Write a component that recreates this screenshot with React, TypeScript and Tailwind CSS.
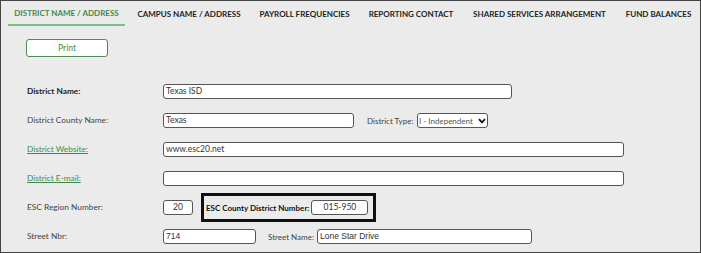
import React from "react";

const inputCls =
  "h-[15px] shrink-0 rounded-[3px] border border-[#555] bg-white px-[2px] text-[8.5px] text-[#333] leading-none flex items-center whitespace-nowrap overflow-hidden";

function Row({ children }: { children: React.ReactNode }) {
  return <div className="flex h-[29px] items-center">{children}</div>;
}

function Label({ children, bold, link }: { children: React.ReactNode; bold?: boolean; link?: boolean }) {
  return (
    <div
      className={
        "w-[136px] shrink-0 text-[8.3px] " +
        (link ? "text-[#3f8a45] underline" : bold ? "font-bold text-[#222]" : "text-[#444]")
      }
    >
      {children}
    </div>
  );
}

export default function App() {
  const tabs: { t: string; w: string }[] = [
    { t: "DISTRICT NAME / ADDRESS", w: "w-[117px]" },
    { t: "CAMPUS NAME / ADDRESS", w: "w-[116px]" },
    { t: "PAYROLL FREQUENCIES", w: "w-[103px]" },
    { t: "REPORTING CONTACT", w: "w-[98px]" },
    { t: "SHARED SERVICES ARRANGEMENT", w: "w-[147px]" },
    { t: "FUND BALANCES", w: "w-[79px]" },
  ];
  return (
    <div
      className="h-[253px] w-[701px] overflow-hidden border border-[#444] bg-[#ebebeb]"
      style={{ fontFamily: "Lato, 'Noto Sans', sans-serif" }}
    >
      <div className="flex h-[25px] items-end gap-[6px] pl-[7px]">
        {tabs.map(({ t, w }, i) => (
          <div
            key={t}
            className={
              "flex h-[25px] shrink-0 items-center justify-center text-[8px] font-bold whitespace-nowrap " +
              w +
              " " +
              (i === 0
                ? "border-b-2 border-[#7bbf7f] text-[#3f8a45]"
                : "text-[#222]")
            }
          >
            {t}
          </div>
        ))}
      </div>
      <div className="pl-[25px] pt-[13px]">
        <button className="flex h-[18px] w-[82px] items-center justify-center rounded-[3px] border border-[#4a8c4f] bg-white text-[8.5px] text-[#3f8a45]">
          Print
        </button>
      </div>
      <div className="pl-[26px] pt-[20px]">
        <Row>
          <Label bold>District Name:</Label>
          <div className={inputCls + " w-[349px]"}>Texas ISD</div>
        </Row>
        <Row>
          <Label>District County Name:</Label>
          <div className={inputCls + " w-[191px]"}>Texas</div>
          <span className="ml-[13px] w-[50px] shrink-0 text-[8px] text-[#444] whitespace-nowrap">District Type:</span>
          <div className={inputCls + " w-[71px] justify-between pl-[1px] pr-[1px] text-[8px]"}>
            <span className="text-[#555]">I - Independent</span>
            <svg width="8" height="6" viewBox="0 0 8 6" className="shrink-0">
              <path d="M1 1.2 L4 4.4 L7 1.2" fill="none" stroke="#111" strokeWidth="1.8" />
            </svg>
          </div>
        </Row>
        <Row>
          <Label link>District Website:</Label>
          <div className={inputCls + " w-[461px]"}>www.esc20.net</div>
        </Row>
        <Row>
          <Label link>District E-mail:</Label>
          <div className={inputCls + " w-[461px]"}></div>
        </Row>
        <Row>
          <Label>ESC Region Number:</Label>
          <div className={inputCls + " w-[30px] justify-center"}>20</div>
          <div className="ml-[8px] flex h-[29px] w-[175px] shrink-0 items-center border-[3px] border-[#111] pl-[2px]">
            <span className="shrink-0 text-[8px] font-bold text-[#111] whitespace-nowrap">ESC County District Number:</span>
            <div className={inputCls + " ml-[2px] w-[57px] justify-center"}>015-950</div>
          </div>
        </Row>
        <Row>
          <Label>Street Nbr:</Label>
          <div className={inputCls + " w-[93px]"} style={{ fontFamily: "'Liberation Sans', Arial, sans-serif" }}>714</div>
          <span className="ml-[12px] w-[49px] shrink-0 text-[8px] text-[#444] whitespace-nowrap">Street Name:</span>
          <div className={inputCls + " w-[215px]"} style={{ fontFamily: "'Liberation Sans', Arial, sans-serif" }}>Lone Star Drive</div>
        </Row>
      </div>
    </div>
  );
}
